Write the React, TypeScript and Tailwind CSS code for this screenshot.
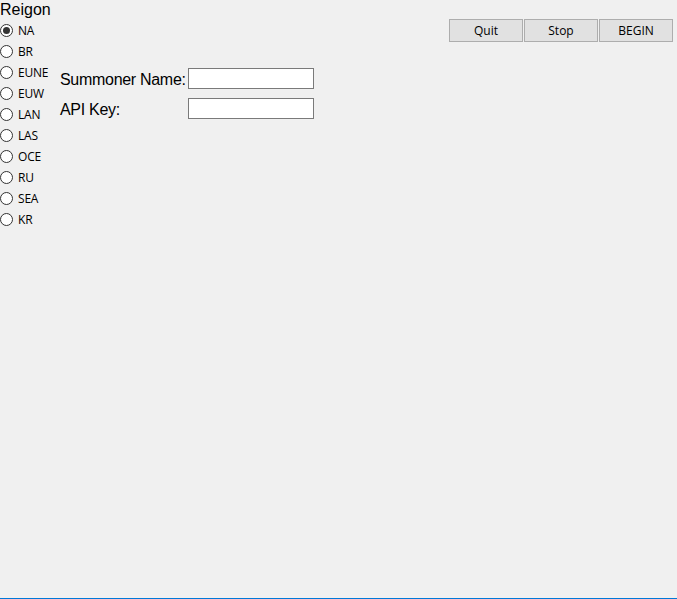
import React, { useState } from "react";

const regions = ["NA", "BR", "EUNE", "EUW", "LAN", "LAS", "OCE", "RU", "SEA", "KR"];

export default function App() {
  const [sel, setSel] = useState("NA");
  return (
    <div className="w-[677px] h-[599px] bg-[#f0f0f0] border-b border-[#0078d7] flex text-black overflow-hidden">
      <div className="flex flex-col w-[60px]">
        <div className="h-[20px] text-[16px] leading-[19px] font-['Liberation_Sans',Arial,sans-serif]">Reigon</div>
        {regions.map((r) => (
          <label key={r} className="h-[21px] flex items-center cursor-default" onClick={() => setSel(r)}>
            <span className="w-[13px] h-[13px] rounded-full border border-[#333333] bg-white flex items-center justify-center">
              {sel === r && <span className="w-[7px] h-[7px] rounded-full bg-[#333333]" />}
            </span>
            <span className="ml-[5px] text-[12px] font-['Open_Sans','Noto_Sans',sans-serif] tracking-[-0.2px]">{r}</span>
          </label>
        ))}
      </div>
      <div className="flex flex-col pt-[68px] gap-[9px]">
        <div className="flex items-center h-[21px]">
          <span className="w-[128px] mt-[2px] text-[16px] font-['Liberation_Sans',Arial,sans-serif] tracking-[-0.3px]">Summoner Name:</span>
          <input className="w-[126px] h-[21px] bg-white border border-[#7a7a7a] outline-none" />
        </div>
        <div className="flex items-center h-[21px]">
          <span className="w-[128px] mt-[2px] text-[16px] font-['Liberation_Sans',Arial,sans-serif] tracking-[-0.3px]">API Key:</span>
          <input className="w-[126px] h-[21px] bg-white border border-[#7a7a7a] outline-none" />
        </div>
      </div>
      <div className="ml-auto pt-[19px] pr-[4px] flex gap-[1px] items-start">
        {["Quit", "Stop", "BEGIN"].map((b) => (
          <button
            key={b}
            className="w-[74px] h-[23px] bg-[#e1e1e1] border border-[#adadad] text-[12px] font-['Open_Sans','Noto_Sans',sans-serif] leading-none"
          >
            {b}
          </button>
        ))}
      </div>
    </div>
  );
}
